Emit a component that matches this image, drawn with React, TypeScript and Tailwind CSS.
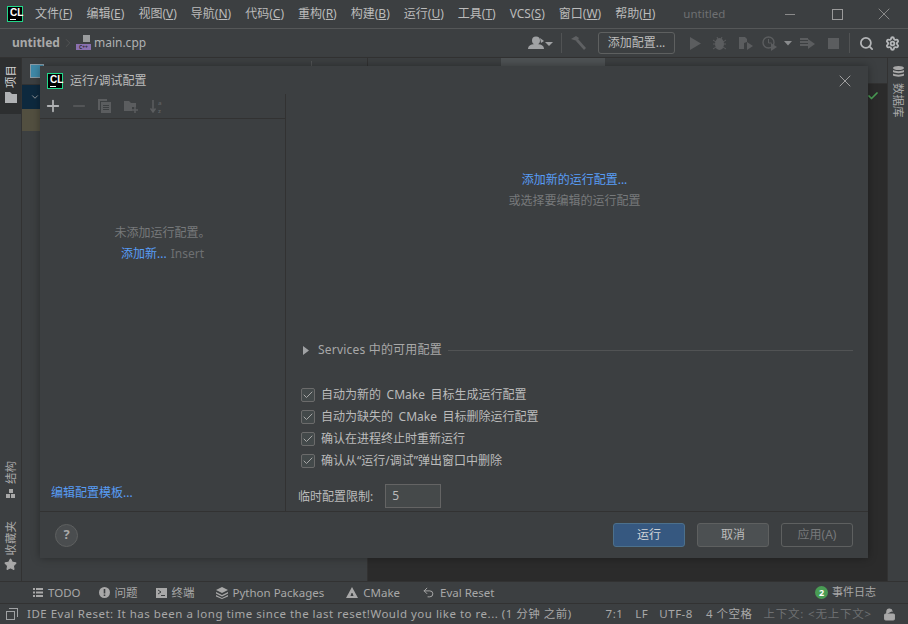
import React from "react";
import { Plus, Minus, Check, X, Search, Settings, ChevronRight, Star, ChevronDown, LockOpen, Undo2 } from "lucide-react";

const FONT = '"Noto Sans","Noto Sans CJK SC",sans-serif';

const menus: [string, string][] = [
  ["文件", "F"], ["编辑", "E"], ["视图", "V"], ["导航", "N"], ["代码", "C"], ["重构", "R"], ["构建", "B"], ["运行", "U"], ["工具", "T"], ["VCS", "S"], ["窗口", "W"], ["帮助", "H"],
];

function Logo() {
  return (
    <div className="bg-black border border-[#21d789] flex flex-col items-start shrink-0 pl-[2px] pt-[1px] w-[16px] h-[16px]">
      <span className="text-white font-bold text-[10px] leading-[10px]" style={{ fontFamily: '"Liberation Sans",sans-serif' }}>CL</span>
      <span className="bg-white w-[6px] h-[1px] mt-[1px]" />
    </div>
  );
}

function Tool({ icon, label, cls }: { icon: React.ReactNode; label: string; cls: string }) {
  return <div className={"flex items-center gap-[5px] " + cls}>{icon}<span>{label}</span></div>;
}

function Cb({ label }: { label: string }) {
  return (
    <div className="flex items-center gap-[6px] h-[22px]">
      <span className="w-[14px] h-[14px] border border-[#6b6b6b] rounded-[2px] bg-[#43494a] flex items-center justify-center shrink-0">
        <Check size={12} strokeWidth={2} className="text-[#a7a7a7]" />
      </span>
      <span className="[word-spacing:2.5px]">{label}</span>
    </div>
  );
}

function Vertical({ text, cls }: { text: string; cls: string }) {
  return <span className={"[writing-mode:vertical-rl] [text-orientation:sideways] text-[11.5px] leading-[14px] " + cls}>{text}</span>;
}

export default function App() {
  return (
    <div className="relative w-[908px] h-[624px] overflow-hidden bg-[#3c3f41] text-[#bbbbbb] text-[12px] flex flex-col" style={{ fontFamily: FONT }}>
      {/* title bar */}
      <div className="h-[29px] shrink-0 border-b border-[#555758] flex items-center pl-[7px] bg-[#3c3f41]">
        <Logo />
        <div className="flex ml-[12px] gap-[14px] text-[12px]">
          {menus.map(([a, b]) => (
            <span key={a} className="whitespace-nowrap">{a}(<span className="underline">{b}</span>)</span>
          ))}
        </div>
        <span className="ml-[28px] text-[#6e7072] text-[11.5px]">untitled</span>
        <div className="ml-auto flex items-center text-[#9a9a9a]">
          <span className="w-[10px] h-[1px] bg-[#8a8a8a] mr-[37px]" />
          <span className="w-[11px] h-[11px] border border-[#9a9a9a] mr-[31px]" />
          <X size={20} strokeWidth={1.2} className="mr-[14px] text-[#8a8a8a]" />
        </div>
      </div>

      {/* nav bar */}
      <div className="h-[29px] shrink-0 flex items-center border-b border-[#323232] pl-[12px] pr-[8px]">
        <span className="font-bold text-[12px] text-[#a9a9a9]">untitled</span>
        <ChevronRight size={14} strokeWidth={1} className="text-[#5e6060] ml-[1px]" />
        <div className="relative w-[15px] h-[16px] ml-[1px]">
          <span className="absolute right-[1px] top-0 w-[7px] h-[7px] bg-[#9a9c9e]" />
          <span className="absolute left-0 bottom-[1px] w-[15px] h-[6px] bg-[#8a70b0] text-[5px] leading-[6px] text-[#2b2b2b] font-bold text-center">C++</span>
        </div>
        <span className="ml-[3px] text-[#afb1b3]">main.cpp</span>
        <div className="ml-auto flex items-center">
          <svg width="25" height="14" viewBox="0 0 25 14" className="mr-[8px]">
            <circle cx="8" cy="4.500" r="4" fill="#a0a2a4" />
            <path d="M0 13c0-4 4-5 8-5s8 1 8 5z" fill="#a0a2a4" />
            <path d="M12 2l4 3-3 2z" fill="#a0a2a4" />
            <path d="M17 6h8l-4 4z" fill="#a0a2a4" />
          </svg>
          <span className="w-[1px] h-[20px] bg-[#515354] mr-[8px]" />
          <svg width="16" height="15" viewBox="0 0 16 15" className="mr-[12px]"><path d="M1 3l5-3 3 2-2 3z" fill="#5f6163" /><path d="M6 5l2-2 8 9-2 2z" fill="#5f6163" /></svg>
          <div className="w-[77px] h-[22px] border border-[#5e6060] rounded-[3px] flex items-center justify-center text-[#bbbbbb]">添加配置...</div>
          <svg width="11" height="13" viewBox="0 0 11 13" className="ml-[15px]"><path d="M0 0l11 6.500L0 13z" fill="#5b5d5f" /></svg>
          <svg width="13" height="14" viewBox="0 0 13 14" className="ml-[12px]"><ellipse cx="6.500" cy="8" rx="4.500" ry="6" fill="#5b5d5f" /><path d="M0 4l3 2M13 4l-3 2M0 8h3M13 8h-3M0 13l3-2M13 13l-3-2M4 1l1 2M9 1L8 3" stroke="#5b5d5f" /></svg>
          <svg width="16" height="14" viewBox="0 0 16 14" className="ml-[12px]"><path d="M1 1h6l2 2v3l-3 1v6H1z" fill="#5b5d5f" /><path d="M9 6l6 4-6 4z" fill="#5b5d5f" /></svg>
          <svg width="16" height="15" viewBox="0 0 16 15" className="ml-[8px]"><circle cx="6.500" cy="6.500" r="5.500" fill="none" stroke="#5b5d5f" strokeWidth="1.400" /><path d="M6.500 3v4h3" fill="none" stroke="#5b5d5f" /><path d="M9 7l6 4-6 4z" fill="#5b5d5f" /></svg>
          <svg width="8" height="5" viewBox="0 0 8 5" className="ml-[6px]"><path d="M0 0h8L4 4.500z" fill="#8a8c8e" /></svg>
          <svg width="16" height="14" viewBox="0 0 16 14" className="ml-[8px]"><path d="M0 2h8v2H0zM0 5h8v2H0zM0 8h8v2H0z" fill="#5b5d5f" /><path d="M8 3l7 5-7 5z" fill="#5b5d5f" /></svg>
          <span className="w-[11px] h-[11px] bg-[#5b5d5f] ml-[12px]" />
          <span className="w-[1px] h-[20px] bg-[#515354] ml-[10px] mr-[9px]" />
          <Search size={15} strokeWidth={2.8} className="text-[#b4b6b8]" />
          <Settings size={15} strokeWidth={3} className="text-[#b4b6b8] ml-[11px]" />
        </div>
      </div>

      {/* main */}
      <div className="flex-1 flex min-h-0">
        <div className="w-[22px] shrink-0 border-r border-[#323232] flex flex-col items-center">
          <div className="w-[21px] h-[56px] bg-[#2d2f30] flex flex-col items-center pt-[7px] text-[#d0d0d0]">
            <Vertical text="项目" cls="rotate-180" />
            <svg width="12" height="11" viewBox="0 0 12 11" className="mt-[4px]"><path d="M0 0h5l2 2h5v9H0z" fill="#b0b2b4" /></svg>
          </div>
          <div className="mt-auto flex flex-col items-center pb-[10px] text-[#a8a8a8]">
            <Vertical text="结构" cls="rotate-180" />
            <svg width="10" height="9" viewBox="0 0 10 9" className="mt-[5px] mb-[23px]"><path d="M3 0h4v4H3zM0 5h4v4H0zM5 5h4v4H5z" fill="#a8a8a8" /></svg>
            <Vertical text="收藏夹" cls="rotate-180" />
            <Star size={13} fill="#a8a8a8" className="mt-[3px]" />
          </div>
        </div>

        <div className="w-[346px] shrink-0 border-r border-[#323232] flex flex-col">
          <div className="h-[27px] border-b border-[#323232] flex items-center pl-[8px]">
            <span className="w-[14px] h-[14px] border border-[#8a9aa4] bg-[#3f89a8]" />
            <span className="ml-auto w-[10px] h-[10px] rounded-full bg-[#9a9c9e]" />
            <span className="ml-[14px] w-[12px] h-[10px] bg-[#9a9c9e]" />
            <span className="ml-[16px] w-[10px] h-[10px] bg-[#7a7c7e]" />
            <span className="ml-[10px] w-[1px] h-[20px] bg-[#515354]" />
            <span className="ml-[10px] mr-[35px] w-[10px] h-[10px] rounded-full bg-[#9a9c9e]" />
          </div>
          <div className="h-[24px] bg-[#0d293e] pl-[8px] flex items-center"><ChevronDown size={10} className="text-[#a8a8a8]" /></div>
          <div className="h-[22px] bg-[#524f40]" />
        </div>

        <div className="flex-1 bg-[#2b2b2b] flex flex-col">
          <div className="h-[26px] bg-[#3c3f41] border-b border-[#323232] flex pl-[133px]">
            <div className="w-[104px] bg-[#4e5254]" />
          </div>
          <div className="flex justify-end pr-[8px] pt-[6px]"><Check size={12} strokeWidth={3.500} className="text-[#499c54]" /></div>
        </div>

        <div className="w-[21px] shrink-0 border-l border-[#323232] flex flex-col items-center pt-[8px] text-[#a8a8a8]">
          <svg width="11" height="13" viewBox="0 0 11 13"><ellipse cx="5.500" cy="2" rx="5.500" ry="2" fill="#a8a8a8" /><path d="M0 4c2 1.500 9 1.500 11 0v2c-2 1.500-9 1.500-11 0zM0 7.500c2 1.500 9 1.500 11 0v2c-2 1.500-9 1.500-11 0z" fill="#a8a8a8" /></svg>
          <Vertical text="数据库" cls="mt-[4px]" />
        </div>
      </div>

      {/* bottom tool bar */}
      <div className="h-[22px] shrink-0 border-t border-[#323232] flex items-center pl-[33px] text-[11.5px] text-[#a8a8a8]">
        <div className="flex items-center">
          <Tool label="TODO" cls="" icon={<svg width="10" height="9" viewBox="0 0 10 9"><path d="M0 0h2v2H0zM3 0h7v2H3zM0 3.500h2v2H0zM3 3.500h7v2H3zM0 7h2v2H0zM3 7h7v2H3z" fill="#a8a8a8" /></svg>} />
          <Tool label="问题" cls="ml-[18px]" icon={<svg width="11" height="11" viewBox="0 0 11 11"><circle cx="5.500" cy="5.500" r="5.500" fill="#a8a8a8" /><path d="M4.700 2h1.600v4.500H4.700zM4.700 7.500h1.600v1.500H4.700z" fill="#3c3f41" /></svg>} />
          <Tool label="终端" cls="ml-[18px]" icon={<svg width="11" height="10" viewBox="0 0 11 10"><path d="M0 0h11v10H0z" fill="#a8a8a8" /><path d="M2 2l3 2-3 2" stroke="#3c3f41" fill="none" /><path d="M5 7.500h4" stroke="#3c3f41" /></svg>} />
          <Tool label="Python Packages" cls="ml-[21px]" icon={<svg width="12" height="12" viewBox="0 0 12 12"><path d="M6 0l6 3-6 3-6-3z" fill="#a8a8a8" /><path d="M0 5l6 3 6-3v1.500l-6 3-6-3zM0 8l6 3 6-3v1.500l-6 2.500-6-2.500z" fill="#a8a8a8" /></svg>} />
          <Tool label="CMake" cls="ml-[22px]" icon={<svg width="12" height="11" viewBox="0 0 12 11"><path d="M6 0l6 11H0z" fill="#a8a8a8" /><path d="M5.500 6h1l1 3h-3z" fill="#3c3f41" /></svg>} />
          <Tool label="Eval Reset" cls="ml-[22px]" icon={<Undo2 size={13} strokeWidth={1.800} />} />
        </div>
        <div className="ml-auto mr-[32px] flex items-center gap-[4px]">
          <span className="w-[13px] h-[13px] rounded-full bg-[#499c54] text-white text-[9px] font-bold flex items-center justify-center leading-none">2</span>
          <span className="text-[11px]">事件日志</span>
        </div>
      </div>

      {/* status bar */}
      <div className="h-[21px] shrink-0 border-t border-[#323232] flex items-center text-[11.5px] text-[#a8a8a8] pl-[6px] pr-[12px] whitespace-nowrap tracking-[0.5px]">
        <span className="relative w-[12px] h-[12px] mr-[9px]">
          <span className="absolute left-0 bottom-0 w-[9px] h-[9px] border border-[#a0a2a4]" />
          <span className="absolute right-0 top-0 w-[9px] h-[9px] border-t border-r border-[#a0a2a4]" />
        </span>
        <span>IDE Eval Reset: It has been a long time since the last reset!Would you like to re... (1 分钟 之前)</span>
        <div className="ml-auto flex items-center">
          <span>7:1</span>
          <span className="ml-[12px]">LF</span>
          <span className="ml-[11px]">UTF-8</span>
          <span className="ml-[13px]">4 个空格</span>
          <span className="ml-[11px] text-[#6e7072] tracking-[0.8px]">上下文: &lt;无上下文&gt;</span>
          <LockOpen size={13} fill="#a8a8a8" className="ml-[11px]" />
        </div>
      </div>

      {/* dialog */}
      <div className="absolute left-[40px] top-[66px] w-[828px] h-[492px] bg-[#3c3f41] shadow-[0_0_8px_rgba(0,0,0,0.35)] flex flex-col">
        <div className="h-[28px] shrink-0 flex items-center pl-[7px] pr-[13px] pt-[1px]">
          <Logo />
          <span className="ml-[7px] text-[12px] text-[#bbbbbb]">运行/调试配置</span>
          <X size={20} strokeWidth={1.100} className="ml-auto text-[#a8a8a8]" />
        </div>
        <div className="flex-1 flex min-h-0 border-b border-[#323232]">
          <div className="w-[246px] shrink-0 border-r border-[#323232] flex flex-col">
            <div className="h-[25px] shrink-0 border-b border-[#323232] flex items-center pl-[4px]">
              <Plus size={18} strokeWidth={2.400} className="text-[#afb1b3]" />
              <Minus size={18} strokeWidth={2.200} className="text-[#5b5d5f] ml-[8px]" />
              <svg width="13" height="14" viewBox="0 0 13 14" className="ml-[10px]"><path d="M0 0h9v2H2v9H0z" fill="#5b5d5f" /><path d="M3 3h10v11H3z" fill="#5b5d5f" /><path d="M5 6.500h6M5 8.500h6M5 10.500h6" stroke="#3c3f41" /></svg>
              <svg width="14" height="13" viewBox="0 0 14 13" className="ml-[13px]"><path d="M0 1h5l2 2h5v4H8v4H0z" fill="#5b5d5f" /><path d="M11 7v6M8 10h6" stroke="#5b5d5f" strokeWidth="1.500" /></svg>
              <svg width="14" height="15" viewBox="0 0 14 15" className="ml-[12px]"><path d="M3 1v11M0.500 9.500L3 13l2.500-3.500" stroke="#5b5d5f" strokeWidth="1.500" fill="none" /><text x="8" y="5.500" fontSize="6" fontWeight="700" fill="#5b5d5f">a</text><text x="8" y="14" fontSize="6" fontWeight="700" fill="#5b5d5f">z</text></svg>
            </div>
            <div className="flex-1 flex flex-col items-center pt-[105px]">
              <span className="text-[#77797b] leading-[18px]">未添加运行配置。</span>
              <div className="mt-[3px] leading-[18px]"><span className="text-[#589df6]">添加新...</span><span className="text-[#6e7072] ml-[4px]">Insert</span></div>
              <div className="mt-auto self-start pl-[11px] pb-[9px] text-[#589df6]">编辑配置模板...</div>
            </div>
          </div>
          <div className="flex-1 flex flex-col pl-[12px] pr-[15px] min-w-0">
            <div className="flex flex-col items-center pt-[76px] pr-[2px]">
              <span className="text-[#589df6] leading-[20px]">添加新的运行配置...</span>
              <span className="text-[#77797b] leading-[20px] mt-[1px]">或选择要编辑的运行配置</span>
            </div>
            <div className="mt-[129px] flex items-center h-[20px] pl-[5px]">
              <svg width="6" height="9" viewBox="0 0 6 9"><path d="M0 0l6 4.500L0 9z" fill="#a0a2a4" /></svg>
              <span className="ml-[9px] text-[#a8a8a8] tracking-[0.2px]">Services 中的可用配置</span>
              <span className="flex-1 h-[1px] bg-[#515354] ml-[6px]" />
            </div>
            <div className="mt-[24px] flex flex-col pl-[3px]">
              <Cb label="自动为新的 CMake 目标生成运行配置" />
              <Cb label="自动为缺失的 CMake 目标删除运行配置" />
              <Cb label="确认在进程终止时重新运行" />
              <Cb label="确认从“运行/调试”弹出窗口中删除" />
            </div>
            <div className="mt-[12px] flex items-center">
              <span className="pt-[1px]">临时配置限制:</span>
              <div className="ml-[12px] w-[56px] h-[24px] border border-[#646464] bg-[#45494a] flex items-center pl-[6px]">5</div>
            </div>
          </div>
        </div>
        <div className="h-[46px] shrink-0 flex items-center pl-[15px] pr-[15px]">
          <span className="w-[23px] h-[23px] rounded-full border border-[#5e6060] bg-[#4a4d4f] flex items-center justify-center font-bold text-[13px] text-[#a8a8a8]">?</span>
          <div className="ml-auto flex gap-[12px]">
            <div className="w-[72px] h-[24px] rounded-[3px] bg-[#365880] border border-[#4c708c] flex items-center justify-center text-[#cfd2d6]">运行</div>
            <div className="w-[72px] h-[24px] rounded-[3px] bg-[#4c5052] border border-[#5e6060] flex items-center justify-center text-[#bbbbbb]">取消</div>
            <div className="w-[72px] h-[24px] rounded-[3px] border border-[#5e6060] flex items-center justify-center text-[#77797b]">应用(A)</div>
          </div>
        </div>
      </div>
    </div>
  );
}
